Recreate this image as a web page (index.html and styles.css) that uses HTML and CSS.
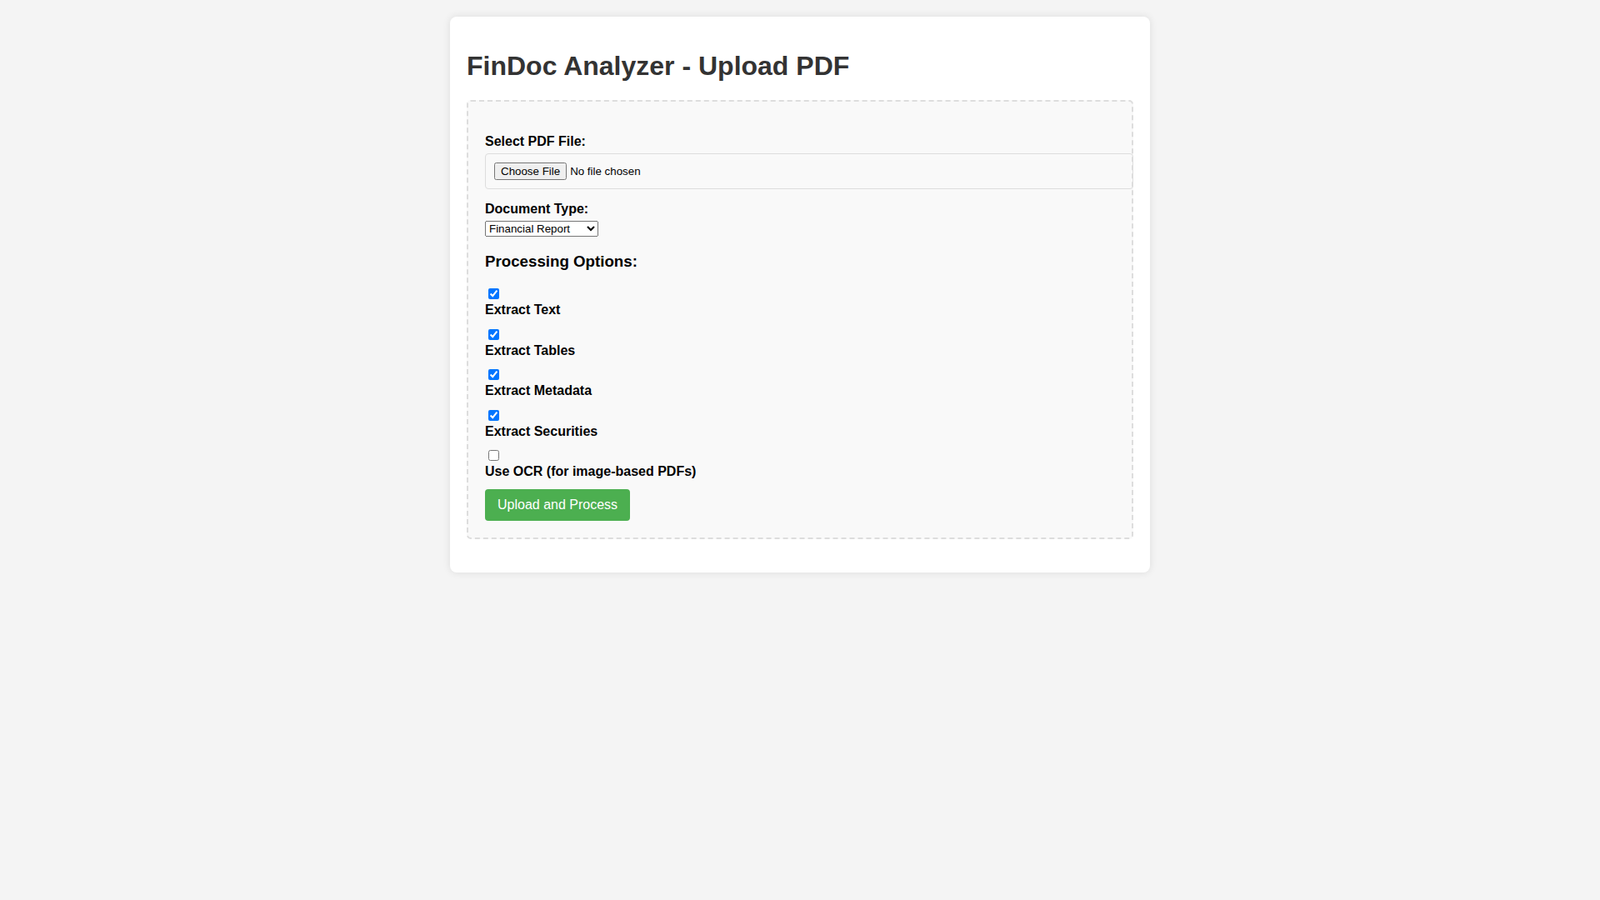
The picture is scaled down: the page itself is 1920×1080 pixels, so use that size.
FILE: index.html
```html
<!DOCTYPE html>
<html lang="en">
<head>
<meta charset="utf-8">
<title>FinDoc Analyzer - Upload PDF</title>
<link rel="stylesheet" href="styles.css">
</head>
<body class="page">
<div class="container">
  <h1 class="title">FinDoc Analyzer - Upload PDF</h1>
  <div class="upload-area">
    <form class="upload-form">
      <div class="form-group">
        <label class="field-label" for="pdfFile">Select PDF File:</label>
        <input class="file-input" type="file" id="pdfFile" accept=".pdf">
      </div>
      <div class="form-group">
        <label class="field-label" for="documentType">Document Type:</label>
        <select class="type-select" id="documentType">
          <option>Financial Report</option>
          <option>Portfolio Statement</option>
          <option>Fund Factsheet</option>
          <option>Other</option>
        </select>
      </div>
      <h3 class="options-title">Processing Options:</h3>
      <div class="checkbox-group">
        <input class="option-check" type="checkbox" id="extractText" checked>
        <label class="field-label" for="extractText">Extract Text</label>
      </div>
      <div class="checkbox-group">
        <input class="option-check" type="checkbox" id="extractTables" checked>
        <label class="field-label" for="extractTables">Extract Tables</label>
      </div>
      <div class="checkbox-group">
        <input class="option-check" type="checkbox" id="extractMetadata" checked>
        <label class="field-label" for="extractMetadata">Extract Metadata</label>
      </div>
      <div class="checkbox-group">
        <input class="option-check" type="checkbox" id="extractSecurities" checked>
        <label class="field-label" for="extractSecurities">Extract Securities</label>
      </div>
      <div class="checkbox-group">
        <input class="option-check" type="checkbox" id="useOcr">
        <label class="field-label" for="useOcr">Use OCR (for image-based PDFs)</label>
      </div>
      <button class="submit-btn" type="button">Upload and Process</button>
    </form>
  </div>
</div>
</body>
</html>
```
FILE: styles.css
```css
.page {
  margin: 0;
  padding: 20px;
  background: #f4f4f4;
  color: #000;
  font-family: "Liberation Sans", Arial, sans-serif;
  font-size: 16px;
}

.container {
  max-width: 800px;
  margin: 0 auto;
  padding: 20px;
  background: #fff;
  border-radius: 8px;
  box-shadow: 0 0 10px rgba(0, 0, 0, 0.1);
}

.title {
  font-size: 32px;
  margin: 21.44px 0;
  color: #333;
}

.upload-area {
  border: 2px dashed #ddd;
  border-radius: 5px;
  padding: 39px 20px 20px;
  margin: 20px 0;
  background: #f9f9f9;
}

.upload-form {
  margin: 0;
}

.form-group {
  margin-bottom: 15px;
}

.field-label {
  display: block;
  margin-bottom: 5px;
  font-weight: bold;
}

.file-input {
  width: 100%;
  padding: 10px;
  border: 1px solid #ddd;
  border-radius: 4px;
  font-family: "Liberation Sans", Arial, sans-serif;
  font-size: 13.333px;
}

.type-select {
  font-family: "Liberation Sans", Arial, sans-serif;
  font-size: 13.333px;
}

.options-title {
  font-size: 18.72px;
  margin: 18.72px 0;
}

.checkbox-group {
  padding-top: 3px;
  margin-bottom: 10.5px;
}

.option-check {
  display: block;
  margin: 0 3px 4px 4px;
}

.submit-btn {
  margin-top: 1px;
  background: #4caf50;
  color: #fff;
  border: none;
  border-radius: 4px;
  padding: 10px 15px;
  font-family: "Liberation Sans", Arial, sans-serif;
  font-size: 16px;
  cursor: pointer;
}
```
